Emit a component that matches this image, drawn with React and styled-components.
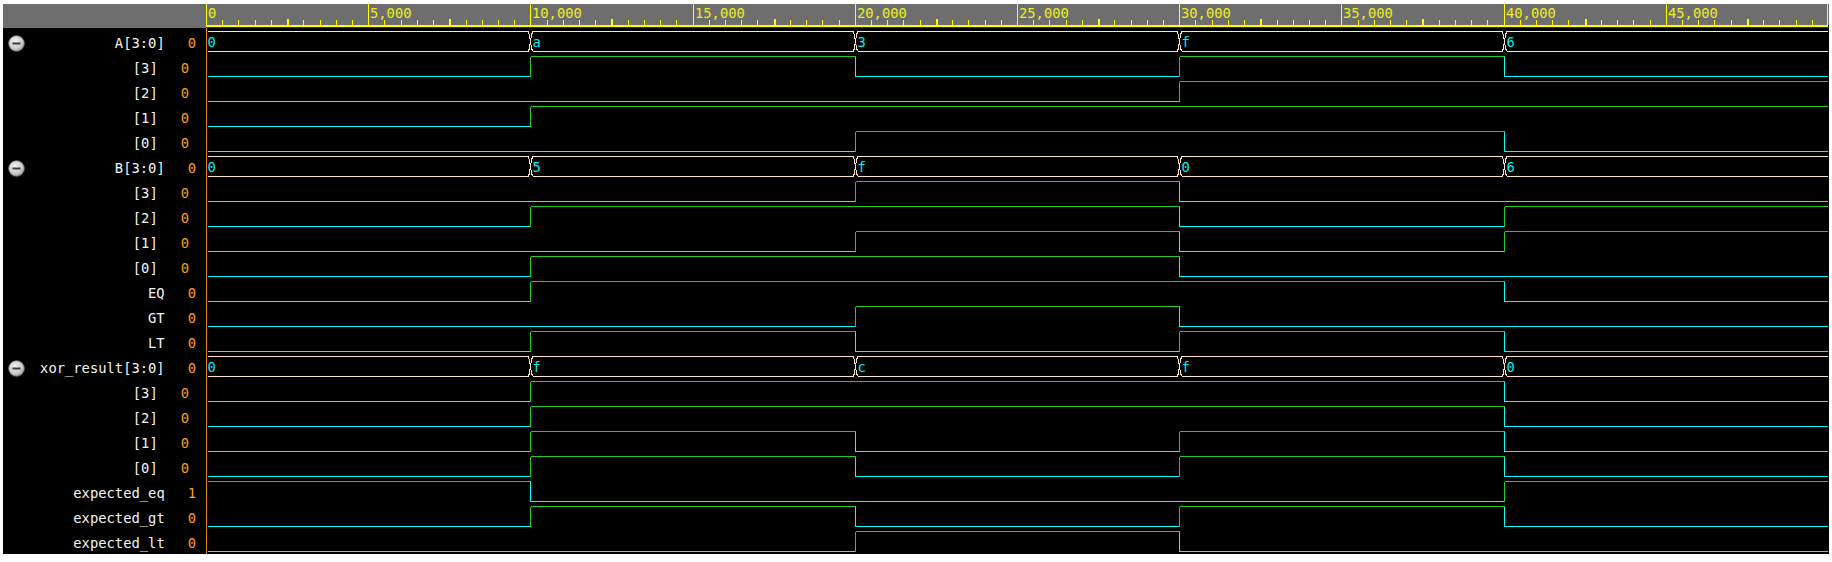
import React from "react";
import styled, { createGlobalStyle } from "styled-components";

const GlobalStyle = createGlobalStyle`
  html, body {
    margin: 0;
    padding: 0;
    background: #ffffff;
  }
  body {
    font-family: "DejaVu Sans Mono", "Liberation Mono", monospace;
  }
`;

const WAVE_W = 1623;
const ROW_H = 25;
const SCALE = 1622 / 50000;
const TIMES = [0, 10000, 20000, 30000, 40000];
const EDGES = TIMES.map((t) => Math.round(t * SCALE) + 0.5);

const LOW = "#00ffff";
const HIGH = "#22cc22";
const BUS = "#ffe4c4";

const signals = [
  { name: "A[3:0]", group: true, bus: ["0", "a", "3", "f", "6"], value: "0" },
  { name: "[3]", child: true, bits: [0, 1, 0, 1, 0], value: "0" },
  { name: "[2]", child: true, bits: [0, 0, 0, 1, 1], value: "0" },
  { name: "[1]", child: true, bits: [0, 1, 1, 1, 1], value: "0" },
  { name: "[0]", child: true, bits: [0, 0, 1, 1, 0], value: "0" },
  { name: "B[3:0]", group: true, bus: ["0", "5", "f", "0", "6"], value: "0" },
  { name: "[3]", child: true, bits: [0, 0, 1, 0, 0], value: "0" },
  { name: "[2]", child: true, bits: [0, 1, 1, 0, 1], value: "0" },
  { name: "[1]", child: true, bits: [0, 0, 1, 0, 1], value: "0" },
  { name: "[0]", child: true, bits: [0, 1, 1, 0, 0], value: "0" },
  { name: "EQ", bits: [0, 1, 1, 1, 0], value: "0" },
  { name: "GT", bits: [0, 0, 1, 0, 0], value: "0" },
  { name: "LT", bits: [0, 1, 0, 1, 0], value: "0" },
  { name: "xor_result[3:0]", group: true, bus: ["0", "f", "c", "f", "0"], value: "0" },
  { name: "[3]", child: true, bits: [0, 1, 1, 1, 0], value: "0" },
  { name: "[2]", child: true, bits: [0, 1, 1, 1, 0], value: "0" },
  { name: "[1]", child: true, bits: [0, 1, 0, 1, 0], value: "0" },
  { name: "[0]", child: true, bits: [0, 1, 0, 1, 0], value: "0" },
  { name: "expected_eq", bits: [1, 0, 0, 0, 1], value: "1" },
  { name: "expected_gt", bits: [0, 1, 0, 1, 0], value: "0" },
  { name: "expected_lt", bits: [0, 0, 1, 0, 0], value: "0" },
];

const Frame = styled.div`
  margin: 4px 0 0 3px;
  width: 1826px;
  height: 550px;
  display: grid;
  grid-template-columns: 203px ${WAVE_W}px;
  grid-template-rows: 24px 526px;
  background: #000;
`;

const NameHeader = styled.div`
  background: #6e6e6e;
`;

const NameList = styled.div`
  display: flex;
  flex-direction: column;
  padding-top: 3px;
`;

const NameRow = styled.div`
  height: ${ROW_H}px;
  display: flex;
  align-items: center;
  padding: 0 ${(p) => (p.$child ? 17 : 10)}px 0 5px;
  font-size: 13.8px;
  line-height: ${ROW_H}px;
`;

const Label = styled.span`
  margin-left: auto;
  color: #f4f4f4;
  white-space: pre;
`;

const Value = styled.span`
  margin-left: 23px;
  color: #ff9a1a;
`;

const Svg = styled.svg`
  display: block;
  shape-rendering: crispEdges;
`;

const Trace = styled.line`
  stroke: ${(p) => p.$color};
  stroke-width: 1;
`;

const BusEdge = styled.polyline`
  fill: none;
  stroke: ${BUS};
  stroke-width: 1;
`;

const BusText = styled.text`
  fill: #00f0f0;
  font-family: "DejaVu Sans Mono", monospace;
  font-size: 13.8px;
`;

const RulerText = styled.text`
  fill: #ecec1c;
  font-family: "DejaVu Sans Mono", monospace;
  font-size: 13.8px;
`;

function CollapseIcon() {
  return (
    <svg width="17" height="17" viewBox="0 0 17 17">
      <defs>
        <radialGradient id="knob" cx="40%" cy="35%" r="70%">
          <stop offset="0%" stopColor="#f2f2f2" />
          <stop offset="70%" stopColor="#c8c8c8" />
          <stop offset="100%" stopColor="#8e8e8e" />
        </radialGradient>
      </defs>
      <circle cx="8.5" cy="8.5" r="7.8" fill="url(#knob)" stroke="#7a7a7a" strokeWidth="0.8" />
      <rect x="4.5" y="7.5" width="8" height="2" fill="#3c3c3c" />
    </svg>
  );
}

function Ruler() {
  const ticks = [];
  for (let t = 0; t <= 50000; t += 500) {
    const x = Math.min(Math.round(t * SCALE), 1621) + 0.5;
    if (t % 5000 === 0) {
      ticks.push(<Trace key={t} x1={x} x2={x} y1={0} y2={22} $color="#ffff00" />);
      if (t < 50000) {
        ticks.push(
          <RulerText key={"l" + t} x={x + 1.5} y={14}>
            {t.toLocaleString("en-US")}
          </RulerText>
        );
      }
    } else if (t % 2500 === 0) {
      ticks.push(<rect key={t} x={x - 0.5} y={15} width={2} height={7} fill="#ffff00" />);
    } else {
      ticks.push(<Trace key={t} x1={x} x2={x} y1={15.5} y2={22} $color="#ffff00" />);
    }
  }
  return (
    <Svg width={WAVE_W} height={24}>
      <rect x={0} y={0} width={WAVE_W} height={21} fill="#6e6e6e" />
      <rect x={0} y={21} width={WAVE_W - 1} height={2} fill="#ffff00" />
      <rect x={0} y={23} width={WAVE_W} height={1} fill="#2e2e2e" />
      {ticks}
    </Svg>
  );
}

function BitTrace({ bits, row }) {
  const top = row * ROW_H + 3.5;
  const bot = row * ROW_H + 23.5;
  const parts = [];
  bits.forEach((b, k) => {
    const x0 = k === 0 ? 2 : EDGES[k];
    const x1 = k === bits.length - 1 ? 1622 : EDGES[k + 1];
    const y = b ? top : bot;
    parts.push(<Trace key={"h" + k} x1={x0} x2={x1} y1={y} y2={y} $color={b ? HIGH : LOW} />);
    if (k > 0 && b !== bits[k - 1]) {
      parts.push(
        <Trace key={"v" + k} x1={EDGES[k]} x2={EDGES[k]} y1={top} y2={bot} $color={b ? HIGH : LOW} />
      );
    }
  });
  return <g>{parts}</g>;
}

function BusTrace({ bus, row }) {
  const top = row * ROW_H + 3.5;
  const bot = row * ROW_H + 23.5;
  const mid = row * ROW_H + 13.5;
  const parts = [];
  bus.forEach((v, k) => {
    const x0 = k === 0 ? 2 : EDGES[k] + 2;
    const x1 = k === bus.length - 1 ? 1622 : EDGES[k + 1] - 2;
    parts.push(<Trace key={"t" + k} x1={x0} x2={x1} y1={top} y2={top} $color={BUS} />);
    parts.push(<Trace key={"b" + k} x1={x0} x2={x1} y1={bot} y2={bot} $color={BUS} />);
    if (k > 0) {
      const x = EDGES[k];
      parts.push(
        <BusEdge key={"x1" + k} points={`${x - 2},${top} ${x - 1},${top + 4} ${x + 1},${bot - 4} ${x + 2},${bot}`} />
      );
      parts.push(
        <BusEdge key={"x2" + k} points={`${x - 2},${bot} ${x - 1},${bot - 4} ${x + 1},${top + 4} ${x + 2},${top}`} />
      );
    }
    parts.push(
      <BusText key={"v" + k} x={k === 0 ? 1.5 : EDGES[k] + 2} y={mid + 5}>
        {v}
      </BusText>
    );
  });
  return <g>{parts}</g>;
}

function Waves() {
  return (
    <Svg width={WAVE_W} height={526}>
      <Trace x1={0.5} x2={0.5} y1={0} y2={526} $color="#e08a1e" />
      {signals.map((s, i) =>
        s.bus ? <BusTrace key={i} bus={s.bus} row={i} /> : <BitTrace key={i} bits={s.bits} row={i} />
      )}
    </Svg>
  );
}

export default function App() {
  return (
    <>
      <GlobalStyle />
      <Frame>
        <NameHeader />
        <Ruler />
        <NameList>
          {signals.map((s, i) => (
            <NameRow key={i} $child={s.child}>
              {s.group && <CollapseIcon />}
              <Label>{s.name}</Label>
              <Value>{s.value}</Value>
            </NameRow>
          ))}
        </NameList>
        <Waves />
      </Frame>
    </>
  );
}
